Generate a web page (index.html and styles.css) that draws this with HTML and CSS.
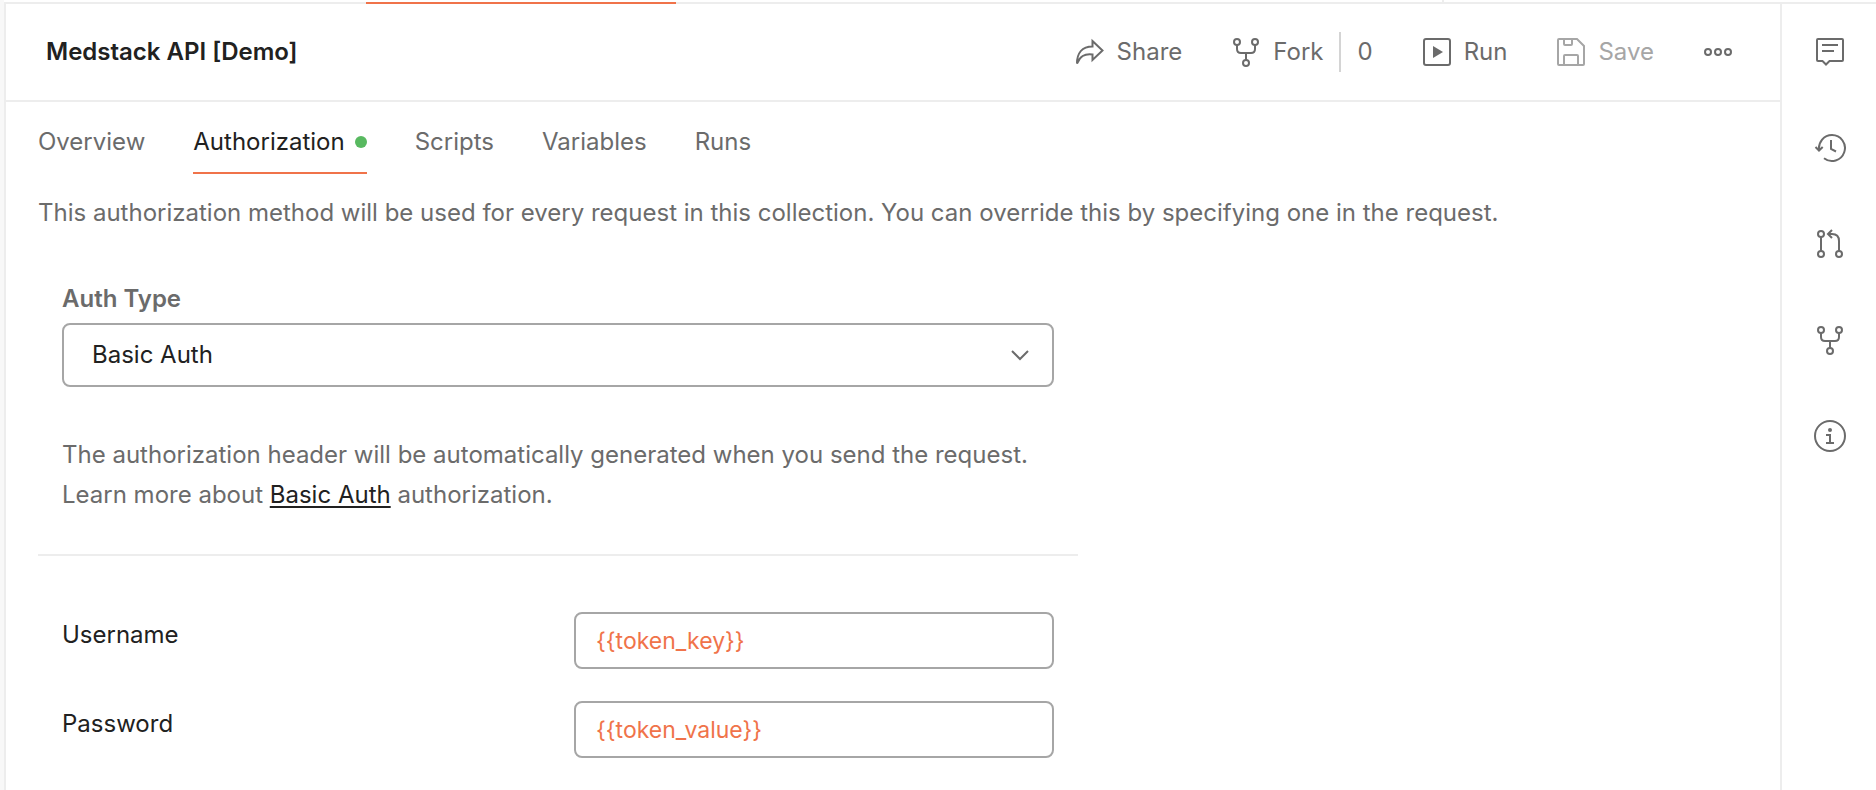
FILE: index.html
```html
<!DOCTYPE html>
<html lang="en">
<head>
<meta charset="utf-8">
<title>Medstack API [Demo]</title>
<link rel="stylesheet" href="styles.css">
</head>
<body>
<svg class="symbols" aria-hidden="true">
  <symbol id="fork" viewBox="0 0 32 32"><circle cx="7" cy="6" r="3"/><circle cx="25" cy="6" r="3"/><circle cx="16" cy="27" r="3"/><path d="M7 9v4q0 4 4 4h10q4 0 4-4V9M16 17v7"/></symbol>
</svg>
<div class="app">
  <div class="tabstrip"><div class="tabstrip-open"></div><div class="tabstrip-end"></div></div>
  <div class="workspace">
    <main class="main">
      <header class="header">
        <h1 class="title">Medstack API [Demo]</h1>
        <div class="actions">
          <button class="action"><svg class="icon" viewBox="0 0 32 32"><path d="M18.500 5 28.500 14.500 18.500 24V18.500C10 17.500 6 20.500 3 27.500 3 17.500 8 10.500 18.500 10.500Z"/></svg>Share</button>
          <div class="fork-group">
            <button class="action"><svg class="icon"><use href="#fork"/></svg>Fork</button>
            <button class="fork-count">0</button>
          </div>
          <button class="action"><svg class="icon" viewBox="0 0 32 32"><rect x="3" y="3" width="26" height="26" rx="2"/><path class="solid" d="M12 10v12l10-6z"/></svg>Run</button>
          <button class="action action-off" disabled><svg class="icon" viewBox="0 0 32 32"><path d="M3 4q0-1 1-1h18l7 7v18q0 1-1 1H4q-1 0-1-1zM9 3v5q0 1 1 1h6q1 0 1-1V3M9 29V20q0-1 1-1h12q1 0 1 1v9"/></svg>Save</button>
          <button class="action" aria-label="More actions"><svg class="icon" viewBox="0 0 32 32"><circle cx="6" cy="16" r="3"/><circle cx="16" cy="16" r="3"/><circle cx="26" cy="16" r="3"/></svg></button>
        </div>
      </header>
      <nav class="tabs">
        <a class="tab" href="#">Overview</a>
        <a class="tab tab-active" href="#">Authorization<span class="dot"></span></a>
        <a class="tab" href="#">Scripts</a>
        <a class="tab" href="#">Variables</a>
        <a class="tab" href="#">Runs</a>
      </nav>
      <p class="intro">This authorization method will be used for every request in this collection. You can override this by specifying one in the request.</p>
      <form class="auth">
        <section class="auth-type">
          <label class="type-label" for="type">Auth Type</label>
          <div class="select-wrap">
            <select class="select" id="type"><option>Basic Auth</option></select>
            <svg class="icon chevron" viewBox="0 0 32 32"><path d="M8 12l8 8 8-8"/></svg>
          </div>
          <p class="help">The authorization header will be automatically generated when you send the request. Learn more about <a class="link" href="#">Basic Auth</a> authorization.</p>
        </section>
        <section class="fields">
          <div class="field"><label class="field-label" for="user">Username</label><input class="input" id="user" type="text" value="{{token_key}}"></div>
          <div class="field"><label class="field-label" for="pass">Password</label><input class="input" id="pass" type="text" value="{{token_value}}"></div>
        </section>
      </form>
    </main>
    <aside class="rail">
      <button class="action" aria-label="Comments"><svg class="icon" viewBox="0 0 32 32"><path d="M4 3h24q1 0 1 1v20q0 1-1 1H15.500L12 28.500 8.500 25H4q-1 0-1-1V4q0-1 1-1zM8 9h16M8 15h12"/></svg></button>
      <button class="action" aria-label="History"><svg class="icon" viewBox="0 0 32 32"><path d="M5 18.500C4 10 10 3 18 3a13 13 0 1 1-8 23.300M1.500 15 5 18.500 8.700 15M17 8v9l5 2.500"/></svg></button>
      <button class="action" aria-label="Pull requests"><svg class="icon" viewBox="0 0 32 32"><circle cx="7" cy="6" r="3"/><circle cx="7" cy="26" r="3"/><circle cx="25" cy="26" r="3"/><path d="M7 9v14M25 23V13q0-7-7-7h-4M18 2l-4 4 4 4"/></svg></button>
      <button class="action" aria-label="Forks"><svg class="icon"><use href="#fork"/></svg></button>
      <button class="action" aria-label="Info"><svg class="icon" viewBox="0 0 32 32"><circle cx="16" cy="16" r="15"/><circle class="solid" cx="16" cy="10" r="2"/><path d="M12 15h4v8M12 23h8"/></svg></button>
    </aside>
  </div>
</div>
</body>
</html>
```
FILE: styles.css
```css
* { box-sizing: border-box; }
body {
  margin: 0;
  background: #fff;
  color: #6b6b6b;
  font: 24px/40px Inter, sans-serif;
}
button, input, select { font: inherit; color: inherit; }
button { padding: 0; border: 0; background: none; }
h1, p { margin: 0; }
.symbols { position: absolute; width: 0; height: 0; }
.app {
  display: flex;
  flex-direction: column;
  min-height: 100vh;
  border-left: 4px solid #f8f8f8;
}
.tabstrip {
  display: flex;
  height: 4px;
  padding-left: 362px;
  background: linear-gradient(#fff 50%, #ededed 50%);
}
.tabstrip-open { width: 310px; border-bottom: 2px solid #f0734a; }
.tabstrip-end { width: 2px; margin-left: auto; margin-right: 432px; background: #ededed; }
.workspace { display: flex; flex: 1; border-left: 2px solid #ededed; }
.main { flex: 1; }
.header {
  display: flex;
  align-items: center;
  justify-content: space-between;
  height: 98px;
  padding: 0 46px 0 40px;
  border-bottom: 2px solid #ededed;
}
.title { color: #212121; font-size: 24px; font-weight: 600; }
.actions { display: flex; align-items: center; gap: 48px; }
.action { display: flex; align-items: center; gap: 11px; }
.action-off { color: #a6a6a6; }
.fork-group { display: flex; gap: 16px; }
.fork-count { padding-left: 16px; border-left: 2px solid #d4d4d4; }
.icon {
  width: 32px;
  height: 32px;
  fill: none;
  stroke: currentColor;
  stroke-width: 2;
}
.solid { fill: currentColor; stroke: none; }
.tabs { display: flex; gap: 48px; padding: 20px 32px 0; }
.tab {
  display: flex;
  align-items: center;
  gap: 10px;
  padding-bottom: 10px;
  border-bottom: 2px solid transparent;
  color: inherit;
  text-decoration: none;
}
.tab-active { color: #212121; border-color: #f0734a; }
.dot { width: 12px; height: 12px; border-radius: 50%; background: #58b960; }
.intro { padding: 19px 32px 0; }
.auth { max-width: 1104px; padding: 0 32px; }
.auth-type { padding: 46px 24px 39px; border-bottom: 2px solid #ededed; }
.type-label { display: block; font-weight: 600; }
.select-wrap { display: grid; align-items: center; margin: 4px 0 48px; }
.select {
  grid-area: 1 / 1;
  height: 64px;
  padding: 0 28px;
  appearance: none;
  border: 2px solid #a6a6a6;
  border-radius: 8px;
  background: #fff;
  color: #212121;
}
.chevron { grid-area: 1 / 1; justify-self: end; margin-right: 18px; pointer-events: none; }
.link { color: #212121; text-decoration-thickness: 2px; text-underline-offset: 3px; }
.fields { display: grid; gap: 32px; padding: 56px 24px 24px; }
.field { display: grid; grid-template-columns: 1fr 480px; }
.field-label { color: #212121; padding-top: 3px; }
.input {
  width: 100%;
  height: 57px;
  padding: 0 20px;
  border: 2px solid #a6a6a6;
  border-radius: 8px;
  background: #fff;
  color: #f0734a;
  font-size: 23px;
}
.rail {
  display: flex;
  flex-direction: column;
  align-items: center;
  gap: 64px;
  width: 96px;
  padding: 32px 0 32px 2px;
  border-left: 2px solid #ededed;
}
.rail .action { height: 32px; }
```
